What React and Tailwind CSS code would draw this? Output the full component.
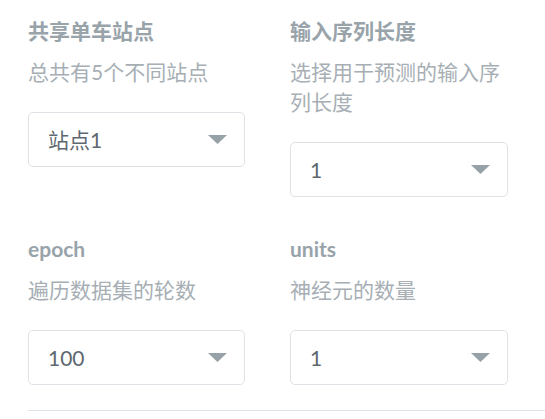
import React from 'react';

const fields = [
  { title: '共享单车站点', desc: '总共有5个不同站点', value: '站点1' },
  { title: '输入序列长度', desc: '选择用于预测的输入序列长度', value: '1' },
  { title: 'epoch', desc: '遍历数据集的轮数', value: '100' },
  { title: 'units', desc: '神经元的数量', value: '1' },
];

function Field({ title, desc, value }) {
  return (
    <div className="flex flex-col">
      <div className="text-[21px] font-bold leading-[28px] text-[#98a3aa]">{title}</div>
      <div className="mt-[12px] text-[21px] leading-[30px] text-[#a7afb5]">{desc}</div>
      <div className="mt-[25px] flex h-[55px] items-center justify-between rounded-[5px] border border-[#dfe2e7] bg-white pl-[19px] pr-[17px]">
        <span className="text-[21px] text-[#5e6870]">{value}</span>
        <svg width="19" height="9" viewBox="0 0 19 9">
          <polygon points="0,0 19,0 9.5,9" fill="#96a2a8" />
        </svg>
      </div>
    </div>
  );
}

export default function App() {
  return (
    <div
      className="min-h-screen bg-white pl-[28px] pt-[17px]"
      style={{ fontFamily: 'Lato, "Noto Sans CJK SC", sans-serif' }}
    >
      <div className="grid grid-cols-[217px_218px] gap-x-[45px] gap-y-[38px]">
        {fields.map((f) => (
          <Field key={f.title} {...f} />
        ))}
      </div>
      <div className="mt-[25px] h-px bg-[#dde4ec]" />
    </div>
  );
}
